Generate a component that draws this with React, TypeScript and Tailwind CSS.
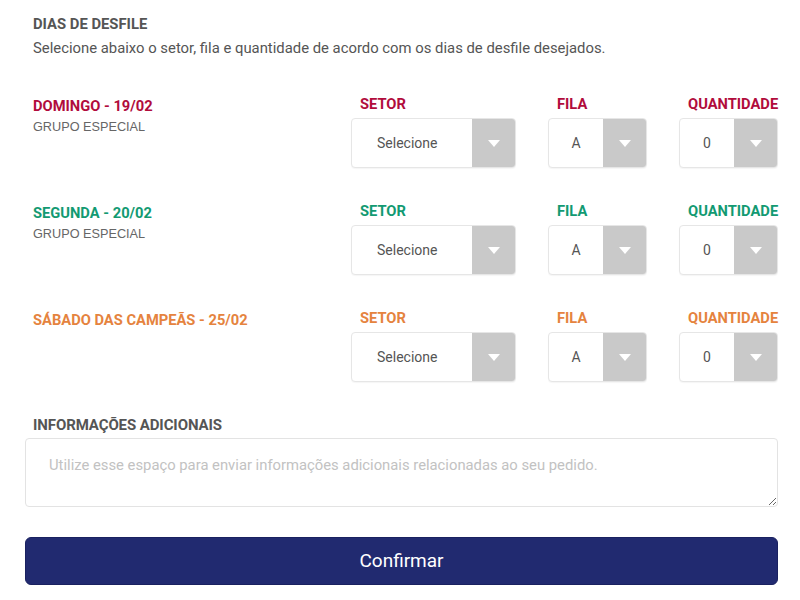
const days = [
  { title: 'DOMINGO - 19/02', sub: 'GRUPO ESPECIAL', color: 'text-[#b10c3c]' },
  { title: 'SEGUNDA - 20/02', sub: 'GRUPO ESPECIAL', color: 'text-[#129a72]' },
  { title: 'SÁBADO DAS CAMPEÃS - 25/02', sub: '', color: 'text-[#e5833e]' },
];

function SelectBox({ value, left = false }: { value: string; left?: boolean }) {
  return (
    <div className="flex h-[50px] rounded-[4px] border border-[#e6e6e6] bg-white shadow-[0_1px_1px_rgba(0,0,0,0.04)] overflow-hidden">
      <div
        className={`flex-1 flex items-center text-[14px] text-[#555] ${
          left ? 'justify-start pl-[25px]' : 'justify-center'
        }`}
      >
        {value}
      </div>
      <div className="w-[43px] bg-[#c9c9c9] flex items-center justify-center">
        <svg width="12" height="7" viewBox="0 0 12 7">
          <path d="M0 0h12L6 7z" fill="#fff" />
        </svg>
      </div>
    </div>
  );
}

function DayRow({ title, sub, color }: { title: string; sub: string; color: string }) {
  return (
    <div className="flex gap-8">
      <div className="flex-1 pl-2 pt-[2px]">
        <div className={`text-[14.7px] font-bold leading-5 ${color}`}>{title}</div>
        {sub && (
          <div className="mt-[3px] text-[12.7px] leading-4 text-[#666] font-['Liberation_Sans',Arial,sans-serif]">
            {sub}
          </div>
        )}
      </div>
      <div className="w-[165px]">
        <div className={`pl-[9px] text-[14.7px] font-bold leading-5 ${color}`}>SETOR</div>
        <div className="mt-1">
          <SelectBox value="Selecione" left />
        </div>
      </div>
      <div className="w-[99px]">
        <div className={`pl-[9px] text-[14.7px] font-bold leading-5 ${color}`}>FILA</div>
        <div className="mt-1">
          <SelectBox value="A" />
        </div>
      </div>
      <div className="w-[99px]">
        <div className={`pl-[9px] text-[14.7px] font-bold leading-5 ${color} whitespace-nowrap`}>QUANTIDADE</div>
        <div className="mt-1">
          <SelectBox value="0" />
        </div>
      </div>
    </div>
  );
}

export default function App() {
  return (
    <div className="w-[800px] h-[600px] bg-white font-['Roboto',sans-serif]">
      <div className="ml-[25px] w-[753px] pt-[14px]">
        <div className="pl-2 text-[14.8px] font-bold leading-5 text-[#555]">DIAS DE DESFILE</div>
        <div className="pl-2 mt-[4px] text-[14.85px] leading-5 text-[#555]">
          Selecione abaixo o setor, fila e quantidade de acordo com os dias de desfile desejados.
        </div>
        <div className="mt-[36px] flex flex-col gap-[33px]">
          {days.map((d) => (
            <DayRow key={d.title} {...d} />
          ))}
        </div>
        <div className="mt-[33px] pl-2 text-[15px] font-bold leading-5 text-[#555] tracking-[-0.1px]">
          INFORMAÇÕES ADICIONAIS
        </div>
        <textarea
          className="mt-[3px] block w-full h-[69px] rounded-[4px] border border-[#e3e3e3] px-[23px] pt-[15px] text-[14.8px] text-[#555] placeholder:text-[#c2c2c2] outline-none"
          placeholder="Utilize esse espaço para enviar informações adicionais relacionadas ao seu pedido."
        />
        <button className="mt-[30px] w-full h-[48px] rounded-[6px] bg-[#212a70] text-white text-[19px] border border-[#1a2160]">
          Confirmar
        </button>
      </div>
    </div>
  );
}
